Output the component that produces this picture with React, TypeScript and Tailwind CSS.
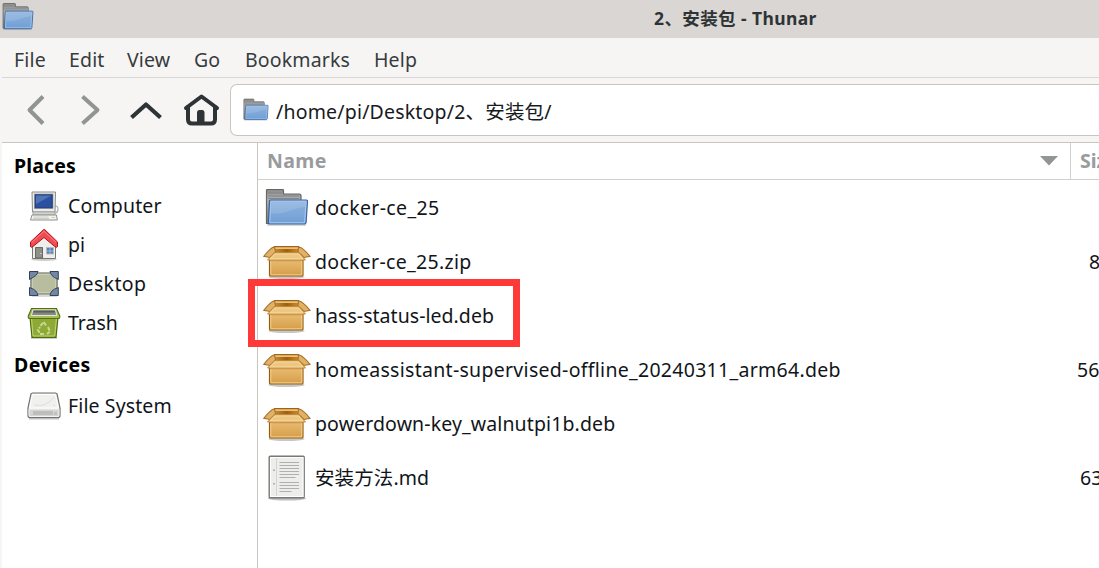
import React from "react";

const FONT = "font-['Noto_Sans','Noto_Sans_CJK_SC',sans-serif]";

function Folder({ className, id }: { className: string; id: string }) {
  return (
    <svg viewBox="0 0 44 38" className={className}>
      <defs>
        <linearGradient id={id} x1="0" y1="0" x2="0" y2="1">
          <stop offset="0" stopColor="#8fb3dd" />
          <stop offset="1" stopColor="#6f9fd6" />
        </linearGradient>
        <linearGradient id={id + "b"} x1="0" y1="0" x2="0" y2="1">
          <stop offset="0" stopColor="#8a8a8a" />
          <stop offset="0.3" stopColor="#b2b2b2" />
          <stop offset="1" stopColor="#777" />
        </linearGradient>
      </defs>
      <path d="M2 36h39" stroke="#000" strokeOpacity=".16" strokeWidth="2" />
      <path d="M1.500 34.500V1.500q0-1 1-1h15q1 0 1 1v3.500h16q1.500 0 1.500 1.500V34.500z" fill={`url(#${id}b)`} stroke="#666" strokeWidth="1.200" />
      <path d="M3 4h14M3 7h31M3 9.500h31" stroke="#7b7b7b" strokeWidth=".8" />
      <path d="M5.500 11h36q1 0 1 1l-1.400 21.500q-.2 1.500-1.700 1.500H4.500q-1 0-1-1l1-22q0-1 1-1z" fill={`url(#${id})`} stroke="#3465a4" strokeWidth="1.200" />
      <path d="M5.800 12.300h35.300L39.600 33.700H4.800z" fill="none" stroke="#a9c8ea" strokeWidth="1" />
      <path d="M6 24c12 3 20-5 34-6l.5-5H6.500z" fill="#fff" opacity=".12" />
    </svg>
  );
}

function Package() {
  return (
    <svg viewBox="0 0 48 36" className="h-9 w-12 shrink-0">
      <defs>
        <linearGradient id="boxFace" x1="0" y1="0" x2="0" y2="1">
          <stop offset="0" stopColor="#c99348" />
          <stop offset=".25" stopColor="#e6b66a" />
          <stop offset="1" stopColor="#d49d49" />
        </linearGradient>
        <linearGradient id="boxInside" x1="0" y1="0" x2="1" y2="0">
          <stop offset="0" stopColor="#d39a45" />
          <stop offset=".5" stopColor="#9f5f0b" />
          <stop offset="1" stopColor="#d8973c" />
        </linearGradient>
      </defs>
      <ellipse cx="23.500" cy="33" rx="18" ry="2" fill="#000" opacity=".22" />
      <path d="M11.500 2.700h24L39 12H8z" fill="url(#boxInside)" stroke="#9b651a" strokeWidth="1.200" />
      <path d="M12 3.200h23l.7 1.800H11.400z" fill="#ecc07b" />
      <path d="M6.500 14h33.500v17q0 1-1 1h-31.500q-1 0-1-1z" fill="url(#boxFace)" stroke="#94600f" strokeWidth="1.200" />
      <path d="M7.800 17v13.800h31V17" fill="none" stroke="#f2ce8e" strokeWidth="1" />
      <path d="M11.500 2.700Q7 4 .8 12.300l6.200 1.200L12.500 8z" fill="#e3b166" stroke="#a6712a" strokeWidth="1.100" />
      <path d="M35.500 2.700q5 1.300 11.500 9.600l-6 1.200L35 8z" fill="#e3b166" stroke="#a6712a" strokeWidth="1.100" />
      <path d="M11.500 8.800h24.500l6.500 7.200H4.500z" fill="#edc680" stroke="#c18a3a" strokeWidth="1" />
      <path d="M12 9.900h23.500l4.400 5H7z" fill="none" stroke="#f8dfae" strokeWidth=".8" />
    </svg>
  );
}

function Doc() {
  return (
    <svg viewBox="0 0 40 46" className="h-[46px] w-10 shrink-0">
      <ellipse cx="20" cy="43.500" rx="19" ry="2" fill="#000" opacity=".25" />
      <rect x="2.200" y="1.200" width="35" height="41.500" rx="1" fill="#ededec" stroke="#777974" strokeWidth="1.400" />
      <rect x="3.500" y="2.500" width="32.500" height="39" fill="none" stroke="#fff" />
      <path d="M9.500 3v38" stroke="#d5d5d5" strokeWidth="1" />
      <path d="M7 14.500v1.500M7 28v1.500" stroke="#8c8c8c" strokeWidth="1.200" />
      <path d="M12.500 7.500h19.500M12.500 10.500h19.500M12.500 13.500h19.500M12.500 16.500h19.500M12.500 19.500h19.500M12.500 22.500h16M12.500 27.500h19.500M12.500 30.500h19.500M12.500 33.500h19.500M12.500 36.500h12" stroke="#b0b0b0" strokeWidth="1.100" />
    </svg>
  );
}

function Computer() {
  return (
    <svg viewBox="0 0 32 32" className="h-8 w-8">
      <path d="M26 16q4-.5 4 3t-3 4.500" fill="none" stroke="#b5b5b0" strokeWidth="1.300" />
      <path d="M4 2h23.500l-.5 20H4.500z" fill="#ecece8" stroke="#8a8b86" />
      <rect x="6.500" y="4" width="18.500" height="14.500" fill="#dcdcd8" stroke="#999" strokeWidth=".7" />
      <rect x="7.200" y="4.800" width="17" height="13" fill="#2b50a0" stroke="#173776" />
      <path d="M8 5.500h15.500L8 14z" fill="#7398cf" opacity=".5" />
      <path d="M5 22h22v3H5z" fill="#d3d3cf" stroke="#999" strokeWidth=".7" />
      <path d="M4 25h24.500l.8 5H2.500z" fill="#f2f2ef" stroke="#91928c" />
      <path d="M5.500 27h15M5 28.500h16M23.500 27.500h3.500" stroke="#c2c3bd" strokeWidth=".8" />
    </svg>
  );
}

function Home() {
  return (
    <svg viewBox="0 0 32 34" className="h-[34px] w-8">
      <ellipse cx="16" cy="31.500" rx="13" ry="1.500" fill="#000" opacity=".2" />
      <path d="M4.500 15L16 6l11.500 9v15.500h-23z" fill="#eeeeec" stroke="#777872" />
      <path d="M7.500 19.500h7v10.500h-7z" fill="#8d9086" stroke="#666963" />
      <path d="M13 25v1" stroke="#fff" />
      <path d="M18.500 19.500h7v6.500h-7z" fill="#5681bb" stroke="#b9bdb8" />
      <path d="M22 20v6M19 23h7" stroke="#b7cce6" strokeWidth=".7" />
      <path d="M15.800 1.500L2.500 14v4.500q.5 1.500 2.400 0L16 9.500l10.800 9q2.200 1.500 2.700 0V14L16.600 1.500z" fill="#ef4b50" stroke="#b80d15" strokeWidth="1" strokeLinejoin="round" />
      <path d="M3.800 14.500L16 3.300l12 11" fill="none" stroke="#f7868a" strokeWidth="1" />
    </svg>
  );
}

function DesktopIcon() {
  return (
    <svg viewBox="0 0 32 28" className="h-7 w-8">
      <path d="M4 26h25" stroke="#000" strokeOpacity=".15" strokeWidth="2" />
      <path d="M6 3h20l3 5v11l-3 5H6l-3-5V8z" fill="#b9bda0" stroke="#55574d" strokeWidth="1.200" />
      <path d="M7.500 4.200h17l3.300 5v9l-3.300 4.600h-17L4.200 18.200v-9z" fill="none" stroke="#d0d4bb" />
      <path d="M1.500 1.500h8.500q-.5 2.500-2.200 4T1.500 9.500zM22 1.500h8.300v8q-4.500-2-6.300-4T22 1.500zM1.500 17.500q4.500 1.500 6.300 3.500t2.200 4.500H1.500zM30.300 17.500q-4.500 1.500-6.300 3.500T22 25.500h8.300z" fill="#7386a3" stroke="#33435e" strokeLinejoin="round" />
    </svg>
  );
}

function TrashIcon() {
  return (
    <svg viewBox="0 0 36 34" className="h-[34px] w-9">
      <path d="M5 32h26" stroke="#000" strokeOpacity=".2" strokeWidth="2" />
      <path d="M4 11h28l-2 20.300H6z" fill="#8daa35" stroke="#4e6c09" strokeWidth="1.200" />
      <path d="M5.500 12h25L28.700 30H7z" fill="none" stroke="#c1d578" />
      <path d="M5.500 2.500h25L33.800 10q.3 2.500-1.500 2.500h-28.500Q1.800 12.500 2.300 10z" fill="#a6bc5c" stroke="#55700e" strokeWidth="1.100" />
      <path d="M7 4h22.500l1.300 5.500H5.300z" fill="#858983" stroke="#e5e9dc" strokeWidth="1" />
      <path d="M7.700 4.500h21l.5 2H7.200z" fill="#5a5f58" />
      <path d="M14.500 20l3-4 3 4M22 21l2 4.500-3 2.500M18 28h-4l-2-4 2-3" fill="none" stroke="#c9d896" strokeWidth="2" strokeDasharray="4 1.200" />
    </svg>
  );
}

function Drive() {
  return (
    <svg viewBox="0 0 36 30" className="h-[30px] w-9">
      <path d="M3 27.500h30" stroke="#000" strokeOpacity=".25" strokeWidth="2" />
      <path d="M6.500 2h23q1.300 0 1.600 1.200L34 17v7.500q0 2-2 2H4q-2 0-2-2V17L4.900 3.200Q5.200 2 6.500 2z" fill="#e6e6e4" stroke="#6e706b" strokeWidth="1.200" />
      <path d="M6.500 3.500h23L32.500 17h-29z" fill="#f0f0ef" stroke="#fff" />
      <path d="M8 14q12 3 20-8M27 14l2 1" fill="none" stroke="#dededc" />
      <path d="M3 18h30v6.500q0 1-1 1H4q-1 0-1-1z" fill="#d5d6d3" stroke="#fff" strokeWidth=".7" />
      <path d="M8 20v4M10 20v4M12 20v4M14 20v4M16 20v4M18 20v4M20 20v4M22 20v4M24 20v4M26 20v4" stroke="#a5a7a2" strokeWidth="1" />
      <path d="M28 21h3v3h-3z" fill="#bec0bb" />
    </svg>
  );
}

function Place({ icon, label, track = "" }: { icon: React.ReactNode; label: string; track?: string }) {
  return (
    <div className="flex h-[39px] items-center pl-6">
      <div className="flex w-9 shrink-0 justify-center">{icon}</div>
      <span className={`ml-[6px] ${track}`}>{label}</span>
    </div>
  );
}

const files = [
  { kind: "folder", name: "docker-ce_25", track: "tracking-[0.35px]", size: "", pad: "" },
  { kind: "package", name: "docker-ce_25.zip", track: "tracking-[0.31px]", size: "82.4 MB", pad: "pl-[19px]" },
  { kind: "package", name: "hass-status-led.deb", track: "tracking-[0.04px]", size: "", pad: "" },
  { kind: "package", name: "homeassistant-supervised-offline_20240311_arm64.deb", track: "tracking-[0.29px]", size: "56.2 MB", pad: "pl-[7px]" },
  { kind: "package", name: "powerdown-key_walnutpi1b.deb", track: "tracking-[0.12px]", size: "", pad: "" },
  { kind: "doc", name: "安装方法.md", track: "tracking-[0.1px]", size: "63 bytes", pad: "pl-[10px]" },
];

const menus = [
  { label: "File", w: "w-[55px]" },
  { label: "Edit", w: "w-[58px]" },
  { label: "View", w: "w-[67px]" },
  { label: "Go", w: "w-[51px]" },
  { label: "Bookmarks", w: "w-[129px]" },
  { label: "Help", w: "w-[60px]" },
];

export default function App() {
  return (
    <div className={`${FONT} relative flex h-[568px] w-[1099px] flex-col overflow-hidden whitespace-nowrap bg-[#f6f5f4] text-[19.5px] leading-[26px] text-[#11151a]`}>
      <header className="flex h-[38px] shrink-0 items-center bg-[#dad6d3]">
        <Folder id="titleFolder" className="-mt-1 ml-[2px] h-[30px] w-8" />
        <h1 className="-mt-[2px] ml-[620px] text-[17.5px] font-bold tracking-[0.4px] text-[#2e3436]">2、安装包 - Thunar</h1>
      </header>
      <div className="flex min-h-0 flex-1 flex-col pl-[2px]">
        <nav className="flex h-10 shrink-0 items-center border-b border-[#d9d6d3] pb-[1px] pl-3 pt-[5px] tracking-[0.15px] text-[#363b3e]">
          {menus.map((m) => (
            <span key={m.label} className={`${m.w} shrink-0`}>{m.label}</span>
          ))}
        </nav>
        <div className="flex h-[65px] shrink-0 items-center border-b border-[#cbc5bf]">
          <svg viewBox="0 0 228 64" className="h-16 w-[228px] shrink-0" fill="none" strokeLinecap="round" strokeLinejoin="round">
            <path d="M41 18.500L27.500 32 41 45.500M80.500 18.500L95.500 32l-15 13.500" stroke="#919495" strokeWidth="4" strokeLinecap="butt" />
            <path d="M129.500 39.500L144 26.500l14.500 13" stroke="#2e3436" strokeWidth="4.200" strokeLinecap="butt" />
            <path d="M184 30L199.500 18.500 215 30" stroke="#2e3436" strokeWidth="4" />
            <path d="M186 29v12.500q0 4 4 4h19q4 0 4-4V29" stroke="#2e3436" strokeWidth="4" />
            <path d="M195 45V34.500q0-2.500 2-2.500h3.500q2 0 2 2.500V45z" fill="#2e3436" />
          </svg>
          <div className="flex h-[52px] flex-1 items-center rounded-l-[7px] border border-r-0 border-[#cbc5bf] bg-white pl-[12px] text-[#171a1c]">
            <Folder id="pathFolder" className="h-6 w-[26px]" />
            <span className="ml-[7px] pt-[3px] tracking-[0.19px]">/home/pi/Desktop/2、安装包/</span>
          </div>
        </div>
        <main className="flex min-h-0 flex-1 bg-white">
          <aside className="w-[256px] shrink-0 border-r border-[#cbc5bf] pt-[10px]">
            <div className="h-[33px] pl-3 font-bold tracking-[0.15px] text-black">Places</div>
            <Place icon={<Computer />} label="Computer" track="tracking-[0.15px]" />
            <Place icon={<Home />} label="pi" />
            <Place icon={<DesktopIcon />} label="Desktop" track="tracking-[0.35px]" />
            <Place icon={<TrashIcon />} label="Trash" />
            <div className="mt-[10px] h-[34px] pl-3 font-bold tracking-[0.4px] text-black">Devices</div>
            <Place icon={<Drive />} label="File System" track="tracking-[0.12px]" />
          </aside>
          <section className="min-w-0 flex-1">
            <div className="flex h-[37px] border-b border-[#d5d0cc] font-bold text-[#999c9d]">
              <div className="flex w-[813px] shrink-0 items-center justify-between border-r border-[#d5d0cc] pl-[9px] pr-3">
                <span className="tracking-[0.4px]">Name</span>
                <svg viewBox="0 0 18 10" className="h-[10px] w-[18px]"><path d="M0 0h18L9 9.500z" fill="#929596" /></svg>
              </div>
              <div className="flex items-center pl-[9px]">Size</div>
            </div>
            <div className="pt-[1px]">
              {files.map((f) => (
                <div key={f.name} className="flex h-[54px] items-center">
                  <div className="flex w-[812px] shrink-0 items-center">
                    <div className="ml-[5px] flex w-12 shrink-0 justify-center">
                      {f.kind === "folder" ? <Folder id="rowFolder" className="h-[38px] w-11" /> : f.kind === "doc" ? <Doc /> : <Package />}
                    </div>
                    <span className={`ml-1 ${f.track}`}>{f.name}</span>
                  </div>
                  <span className={`${f.pad} shrink-0`}>{f.size}</span>
                </div>
              ))}
            </div>
          </section>
        </main>
      </div>
      <div className="absolute left-[248px] top-[279px] h-[68px] w-[272px] border-[7px] border-[#ff3838]" />
    </div>
  );
}
